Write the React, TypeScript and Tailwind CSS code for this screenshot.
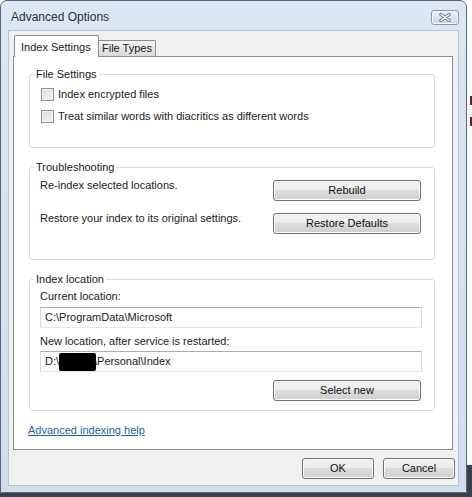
import React from "react";

const btn =
  "flex items-center justify-center rounded-[3px] border border-[#707070] bg-[linear-gradient(#f2f2f2,#ebebeb_50%,#dddddd_50%,#cfcfcf)] shadow-[inset_0_0_0_1px_#fbfbfb] text-[11px] text-[#111]";

const field =
  "flex items-center h-[21px] w-[382px] ml-[10px] pl-[4px] bg-white border border-[#abadb3] border-l-[#d6d9de] border-r-[#d6d9de] border-b-[#e3e6ea] text-[11px]";

function Checkbox({ label }: { label: string }) {
  return (
    <div className="flex items-center gap-[4px] h-[13px]">
      <span className="w-[13px] h-[13px] border border-[#8e8f8f] bg-[linear-gradient(135deg,#d6d6d6,#f7f7f7)] shadow-[inset_0_0_0_1px_#f2f2f2]" />
      <span className="leading-[13px]">{label}</span>
    </div>
  );
}

function Group({ title, height, children }: { title: string; height: number; children: React.ReactNode }) {
  return (
    <div
      className="relative w-[406px] border border-[#d5dfe5] rounded-[3px] shrink-0"
      style={{ height }}
    >
      <span className="absolute left-[4px] top-[-7px] bg-white px-[2px] leading-[13px]">{title}</span>
      {children}
    </div>
  );
}

function CloseGlyph() {
  return (
    <svg width="12" height="9" viewBox="0 0 12 9">
      <path d="M2 1.5 L10 7.5 M10 1.5 L2 7.5" stroke="#6d7888" strokeWidth="3.4" strokeLinecap="round" />
      <path d="M2 1.5 L10 7.5 M10 1.5 L2 7.5" stroke="#ffffff" strokeWidth="1.4" strokeLinecap="round" />
    </svg>
  );
}

export default function App() {
  return (
    <div className="w-[472px] h-[497px] overflow-hidden bg-white font-['Liberation_Sans',Arial,sans-serif] text-[11px] text-[#1a1a1a]">
      <div className="flex h-[493px]">
        {/* window */}
        <div className="w-[467px] h-[493px] flex flex-col border border-[#5a6575] rounded-t-[7px] bg-[linear-gradient(180deg,#dde7f3,#d2deec)]">
          {/* title bar */}
          <div className="h-[29px] flex items-center justify-between pl-[10px] pr-[7px] pt-[3px]">
            <span className="text-[12px] text-[#2e2e2e] leading-[14px]">Advanced Options</span>
            <div className="w-[28px] h-[15px] flex items-center justify-center rounded-[3px] border border-[#8b97a9] bg-[linear-gradient(#e9eff7,#cdd8e6)] shadow-[inset_0_0_0_1px_#f3f6fa]">
              <CloseGlyph />
            </div>
          </div>

          {/* client area */}
          <div className="mx-[7px] w-[451px] h-[456px] border border-[#b7c4d4] bg-[#f0f0f0] flex flex-col">
            <div className="pl-[4px] pt-[4px]">
              {/* tabs */}
              <div className="flex items-end pl-[1px] relative z-10 -mb-px">
                <div className="h-[22px] w-[85px] bg-white border border-[#898c95] border-b-0 rounded-t-[2px] flex items-start pt-[3px] pl-[6px] text-[11px]">
                  Index Settings
                </div>
                <div className="h-[16px] w-[57px] mb-[1px] border border-l-0 border-b-0 border-[#898c95] rounded-tr-[2px] bg-[linear-gradient(#f4f4f4,#e6e6e6_50%,#d9d9d9)] flex items-center pl-[3px] text-[11px]">
                  File Types
                </div>
              </div>

              {/* panel */}
              <div className="w-[440px] h-[394px] bg-white border border-[#898c95] flex flex-col pt-[17px] pl-[15px]">
                <Group title="File Settings" height={74}>
                  <div className="flex flex-col gap-[9px] pt-[13px] pl-[11px]">
                    <Checkbox label="Index encrypted files" />
                    <Checkbox label="Treat similar words with diacritics as different words" />
                  </div>
                </Group>

                <div className="mt-[19px]">
                  <Group title="Troubleshooting" height={93}>
                    <div className="flex flex-col pt-[11px] pl-[10px] pr-[13px]">
                      <div className="flex items-start justify-between">
                        <span className="leading-[13px]">Re-index selected locations.</span>
                        <div className={`${btn} w-[148px] h-[21px] mt-[1px]`}>Rebuild</div>
                      </div>
                      <div className="flex items-start justify-between mt-[11px]">
                        <span className="leading-[13px]">Restore your index to its original settings.</span>
                        <div className={`${btn} w-[148px] h-[21px] mt-[1px]`}>Restore Defaults</div>
                      </div>
                    </div>
                  </Group>
                </div>

                <div className="mt-[19px]">
                  <Group title="Index location" height={132}>
                    <div className="flex flex-col pt-[10px]">
                      <span className="pl-[10px] leading-[13px]">Current location:</span>
                      <div className={`${field} mt-[4px]`}>C:\ProgramData\Microsoft</div>
                      <span className="pl-[10px] leading-[13px] mt-[7px]">New location, after service is restarted:</span>
                      <div className={`${field} mt-[3px]`}>
                        <span>D:\</span>
                        <span className="inline-block w-[37px] h-[18px] bg-black rounded-[2px]" />
                        <span className="-ml-[2px]">\Personal\Index</span>
                      </div>
                      <div className="flex justify-end pr-[13px] mt-[8px]">
                        <div className={`${btn} w-[148px] h-[21px]`}>Select new</div>
                      </div>
                    </div>
                  </Group>
                </div>

                <div className="mt-[13px] -ml-[1px] leading-[13px]">
                  <span className="text-[#1f5fae] underline underline-offset-[1px]">Advanced indexing help</span>
                </div>
              </div>
            </div>

            {/* dialog buttons */}
            <div className="flex justify-end gap-[9px] pr-[3px] mt-[8px]">
              <div className={`${btn} w-[72px] h-[21px]`}>OK</div>
              <div className={`${btn} w-[72px] h-[21px]`}>Cancel</div>
            </div>
          </div>
        </div>

        {/* desktop behind */}
        <div className="flex-1 bg-white flex flex-col items-end pt-[96px]">
          <span className="w-[2px] h-[9px] bg-[#6b1c33]" />
          <span className="w-[2px] h-[9px] bg-[#6b1c33] mt-[12px]" />
          <span className="flex-1" />
          <span className="w-[5px] h-[28px] bg-[#3c4048]" />
        </div>
      </div>
      <div className="h-[4px] bg-[#3c4048]" />
    </div>
  );
}
